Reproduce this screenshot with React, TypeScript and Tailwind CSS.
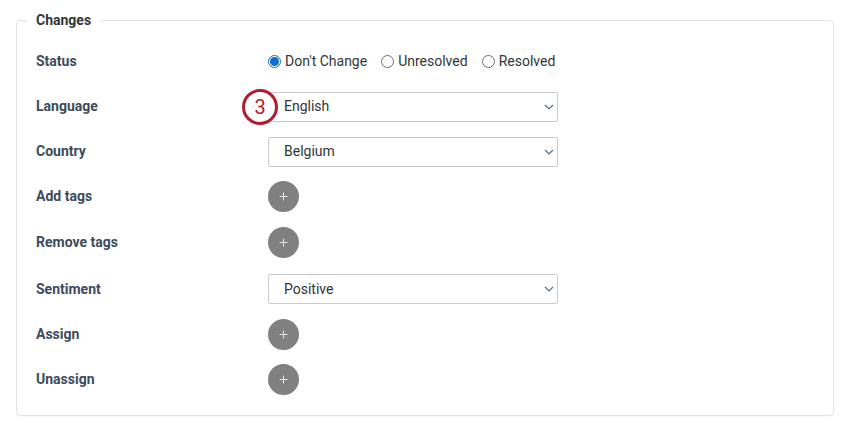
import React from 'react';

const font = { fontFamily: 'Roboto, "Noto Sans", sans-serif' };

const Chevron = () => (
  <svg width="10" height="6" viewBox="0 0 10 6" className="text-[#556b82]">
    <path d="M1 1l4 4 4-4" fill="none" stroke="currentColor" strokeWidth="1.2" />
  </svg>
);

const Select: React.FC<{ value: string }> = ({ value }) => (
  <div className="flex h-[30px] w-[290px] items-center justify-between rounded-[2px] border border-[#c8ccd0] bg-white pl-[15px] pr-[3px] text-[14px] text-[#32363a]">
    <span>{value}</span>
    <Chevron />
  </div>
);

const AddButton = () => (
  <div className="flex h-[31px] w-[31px] items-center justify-center rounded-full bg-[#808080]">
    <svg width="9" height="9" viewBox="0 0 9 9">
      <path d="M4.5 0.5v8M0.5 4.5h8" stroke="#e6e6e6" strokeWidth="1" />
    </svg>
  </div>
);

const Radio: React.FC<{ label: string; checked?: boolean }> = ({ label, checked }) => (
  <label className="flex items-center gap-[4px]">
    {checked ? (
      <span className="flex h-[13px] w-[13px] items-center justify-center rounded-full border border-[#0a6ed1]">
        <span className="h-[9px] w-[9px] rounded-full bg-[#0a6ed1]" />
      </span>
    ) : (
      <span className="h-[13px] w-[13px] rounded-full border border-[#6a6d70]" />
    )}
    <span>{label}</span>
  </label>
);

const rows: { label: string; h: string; control: React.ReactNode }[] = [
  { label: 'Language', h: 'h-[45px]', control: <Select value="English" /> },
  { label: 'Country', h: 'h-[45px]', control: <Select value="Belgium" /> },
  { label: 'Add tags', h: 'h-[45px]', control: <AddButton /> },
  { label: 'Remove tags', h: 'h-[47px]', control: <AddButton /> },
  { label: 'Sentiment', h: 'h-[46px]', control: <Select value="Positive" /> },
  { label: 'Assign', h: 'h-[44px]', control: <AddButton /> },
  { label: 'Unassign', h: 'h-[46px]', control: <AddButton /> },
];

export default function App() {
  return (
    <div className="h-[425px] w-[850px] bg-white pl-[16px] pr-[16px] pt-[10px]" style={font}>
      <fieldset className="h-[406px] w-[818px] rounded-[4px] border border-[#e3e3e3] pl-[19px] shadow-[0_1px_1px_rgba(0,0,0,0.04)]">
        <legend className="ml-[-9px] px-[9px] text-[14px] font-bold leading-[20px] text-[#32363a]">Changes</legend>
        <div className="flex flex-col pt-[11px]">
          <div className="flex h-[43px] items-center pb-[3px]">
            <div className="w-[232px] text-[14px] font-bold text-[#3d4b5c]">Status</div>
            <div className="flex items-center gap-[14px] text-[14px] text-[#32363a]">
              <Radio label="Don't Change" checked />
              <Radio label="Unresolved" />
              <Radio label="Resolved" />
            </div>
          </div>
          {rows.map((r, i) => (
            <div key={r.label} className={`flex items-center ${r.h}`}>
              <div className="w-[232px] text-[14px] font-bold text-[#3d4b5c]">{r.label}</div>
              <div className="relative">
                {r.control}
                {i === 0 && (
                  <div className="absolute left-[-26px] top-[-3px] flex h-[36px] w-[36px] items-center justify-center rounded-full border-[3px] border-[#b31b2f] bg-white text-[20px] text-[#b31b2f]">
                    3
                  </div>
                )}
              </div>
            </div>
          ))}
        </div>
      </fieldset>
    </div>
  );
}
